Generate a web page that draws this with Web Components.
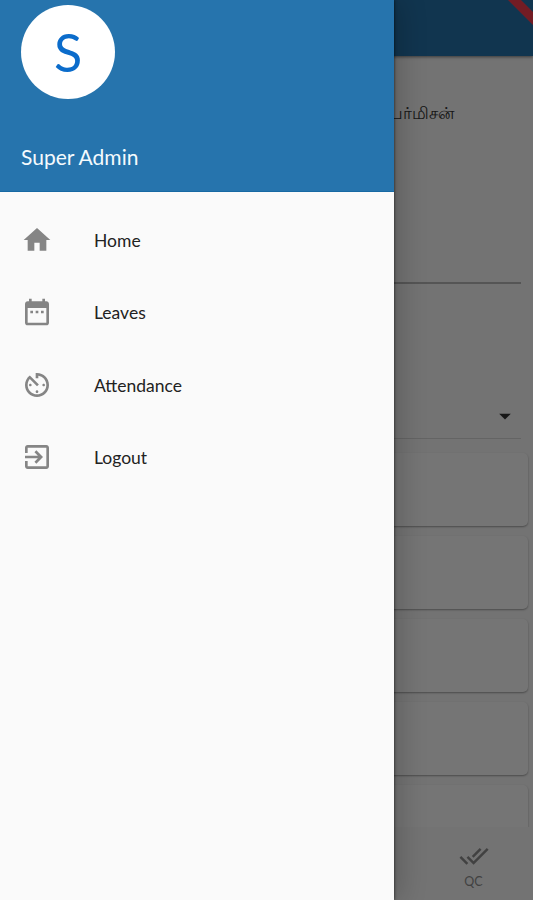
<!DOCTYPE html>
<html lang="en">
<head>
<meta charset="utf-8">
<title>Home</title>
<style>
    html, body {
        margin: 0;
        height: 100%;
        overflow: hidden;
        font-family: Lato, 'Noto Sans', sans-serif;
    }
</style>
</head>
<body>
<app-shell>
    <home-page></home-page>
    <side-drawer slot="drawer" name="Super Admin" initial="S">
        <drawer-item icon="home">Home</drawer-item>
        <drawer-item icon="calendar">Leaves</drawer-item>
        <drawer-item icon="timer">Attendance</drawer-item>
        <drawer-item icon="exit">Logout</drawer-item>
    </side-drawer>
</app-shell>

<script>
const icons = {
    home: 'M10 20v-6h4v6h5v-8h3L12 3 2 12h3v8z',
    calendar: 'M9 11H7v2h2v-2zm4 0h-2v2h2v-2zm4 0h-2v2h2v-2zm2-7h-1V2h-2v2H8V2H6v2H5c-1.11 0-1.99.9-1.99 2L3 20c0 1.1.89 2 2 2h14c1.1 0 2-.9 2-2V6c0-1.1-.9-2-2-2zm0 16H5V9h14v11z',
    timer: 'M11 17c0 .55.45 1 1 1s1-.45 1-1-.45-1-1-1-1 .45-1 1zm0-14v4h2V5.08c3.39.49 6 3.39 6 6.92 0 3.87-3.13 7-7 7s-7-3.13-7-7c0-1.68.59-3.22 1.58-4.42L12 13l1.41-1.41-6.8-6.8v.02C4.42 6.45 3 9.05 3 12c0 4.97 4.02 9 9 9 4.97 0 9-4.03 9-9s-4.03-9-9-9h-1zm7 9c0-.55-.45-1-1-1s-1 .45-1 1 .45 1 1 1 1-.45 1-1zM6 12c0 .55.45 1 1 1s1-.45 1-1-.45-1-1-1-1 .45-1 1z',
    exit: 'M10.09 15.59L11.5 17l5-5-5-5-1.41 1.41L12.67 11H3v2h9.67l-2.58 2.59zM19 3H5c-1.11 0-2 .9-2 2v4h2V5h14v14H5v-4H3v4c0 1.1.89 2 2 2h14c1.1 0 2-.9 2-2V5c0-1.1-.9-2-2-2z',
    down: 'M7 10l5 5 5-5z',
    doneAll: 'M18 7l-1.41-1.41-6.34 6.34 1.41 1.41L18 7zm4.24-1.41L11.66 16.17 7.48 12l-1.41 1.41L11.66 19l12-12-1.42-1.41zM.41 13.41L6 19l1.41-1.41L1.83 12 .41 13.41z'
};

function attach(el, html) {
    const template = document.createElement('template');
    template.innerHTML = html;
    el.attachShadow({ mode: 'open' });
    el.shadowRoot.appendChild(template.content.cloneNode(true));
}

class MdIcon extends HTMLElement {
    connectedCallback() {
        if (this.shadowRoot) return;
        attach(this, `
            <style>
                :host { display: block; width: 32px; height: 32px; flex: none; }
                svg { display: block; width: 100%; height: 100%; fill: currentColor; }
            </style>
            <svg viewBox="0 0 24 24"><path d="${icons[this.getAttribute('name')]}"/></svg>
        `);
    }
}

class AppShell extends HTMLElement {
    constructor() {
        super();
        attach(this, `
            <style>
                :host { display: block; position: relative; height: 100vh; overflow: hidden; }
                .scrim { position: absolute; inset: 0; background: rgba(0, 0, 0, .54); }
                ::slotted([slot=drawer]) { position: absolute; top: 0; bottom: 0; left: 0; }
            </style>
            <slot></slot>
            <div class="scrim"></div>
            <slot name="drawer"></slot>
        `);
    }
}

class SideDrawer extends HTMLElement {
    constructor() {
        super();
        attach(this, `
            <style>
                :host {
                    display: block;
                    width: 394px;
                    background: #fafafa;
                    box-shadow: 0 0 3px rgba(0, 0, 0, .75), 6px 0 26px rgba(0, 0, 0, .2);
                }
                header {
                    box-sizing: border-box;
                    height: 192px;
                    padding: 4.5px 21px 0;
                    background: #2674ad;
                    border-bottom: 1px solid #1769a3;
                }
                .avatar {
                    display: flex;
                    align-items: center;
                    justify-content: center;
                    width: 94px;
                    height: 94px;
                    border-radius: 50%;
                    background: #fff;
                    color: #0b6ccb;
                    font-size: 52px;
                    line-height: 94px;
                }
                .name {
                    margin-top: 44.5px;
                    color: #f4fafd;
                    font-size: 21px;
                    line-height: 28px;
                }
                nav { padding-top: 11.5px; }
            </style>
            <header>
                <div class="avatar"></div>
                <div class="name"></div>
            </header>
            <nav><slot></slot></nav>
        `);
        this.shadowRoot.querySelector('.avatar').textContent = this.getAttribute('initial');
        this.shadowRoot.querySelector('.name').textContent = this.getAttribute('name');
    }
}

class DrawerItem extends HTMLElement {
    constructor() {
        super();
        attach(this, `
            <style>
                :host {
                    display: flex;
                    align-items: center;
                    gap: 41px;
                    height: 72.5px;
                    padding-left: 21px;
                    color: #222;
                    font-size: 17.5px;
                }
                md-icon { color: #858585; }
                span { padding-top: 1px; }
            </style>
            <md-icon name="${this.getAttribute('icon')}"></md-icon>
            <span><slot></slot></span>
        `);
    }
}

class JobCard extends HTMLElement {
    constructor() {
        super();
        attach(this, `
            <style>
                :host {
                    display: block;
                    flex: none;
                    height: 73px;
                    border-radius: 5px;
                    background: #fff;
                    box-shadow: 0 1px 2px rgba(0, 0, 0, .35);
                }
            </style>
        `);
    }
}

class HomePage extends HTMLElement {
    constructor() {
        super();
        attach(this, `
            <style>
                :host {
                    display: flex;
                    flex-direction: column;
                    height: 100%;
                    background: #fafafa;
                    isolation: isolate;
                }
                .bar {
                    position: relative;
                    z-index: 1;
                    flex: none;
                    height: 56px;
                    background: #2674ad;
                    box-shadow: 0 1px 3px rgba(0, 0, 0, .5);
                }
                /* corner ribbon lies over the app bar */
                .ribbon {
                    position: absolute;
                    top: 0;
                    right: 0;
                    width: 25px;
                    height: 25px;
                    background: #fb3e50;
                    clip-path: polygon(0 0, 52% 0, 100% 48%, 100% 100%);
                }
                .heading {
                    flex: none;
                    height: 228px;
                    box-sizing: border-box;
                    margin: 0 12px;
                    padding: 45px 67px 0 0;
                    border-bottom: 2px solid #b9b9b9;
                    color: #333;
                    font-size: 17px;
                    line-height: 24px;
                    text-align: right;
                }
                .select {
                    flex: none;
                    display: flex;
                    align-items: flex-end;
                    justify-content: flex-end;
                    height: 155px;
                    box-sizing: border-box;
                    margin: 0 12px;
                    padding: 0 2px 8px 0;
                    border-bottom: 1px solid #dadada;
                    color: #333;
                }
                .select md-icon { width: 28px; height: 28px; }
                .list {
                    flex: 1;
                    min-height: 0;
                    display: flex;
                    flex-direction: column;
                    gap: 10px;
                    padding: 14px 5px 0;
                    overflow: hidden;
                }
                .tabs {
                    flex: none;
                    display: flex;
                    justify-content: flex-end;
                    height: 73px;
                    background: #fafafa;
                }
                .tab {
                    display: flex;
                    flex-direction: column;
                    align-items: center;
                    width: 119px;
                    padding-top: 14px;
                    box-sizing: border-box;
                    color: #8f8f8f;
                    font-size: 12.5px;
                    line-height: 14px;
                }
                .tab md-icon { width: 30px; height: 30px; margin-bottom: 4px; }
            </style>
            <div class="bar"><div class="ribbon"></div></div>
            <div class="heading" lang="ta">பெர்மிசன்</div>
            <div class="select"><md-icon name="down"></md-icon></div>
            <div class="list">
                <job-card></job-card>
                <job-card></job-card>
                <job-card></job-card>
                <job-card></job-card>
                <job-card></job-card>
            </div>
            <div class="tabs">
                <div class="tab"><md-icon name="doneAll"></md-icon><span>QC</span></div>
            </div>
        `);
    }
}

window.customElements.define('md-icon', MdIcon);
window.customElements.define('job-card', JobCard);
window.customElements.define('home-page', HomePage);
window.customElements.define('drawer-item', DrawerItem);
window.customElements.define('side-drawer', SideDrawer);
window.customElements.define('app-shell', AppShell);
</script>
</body>
</html>
